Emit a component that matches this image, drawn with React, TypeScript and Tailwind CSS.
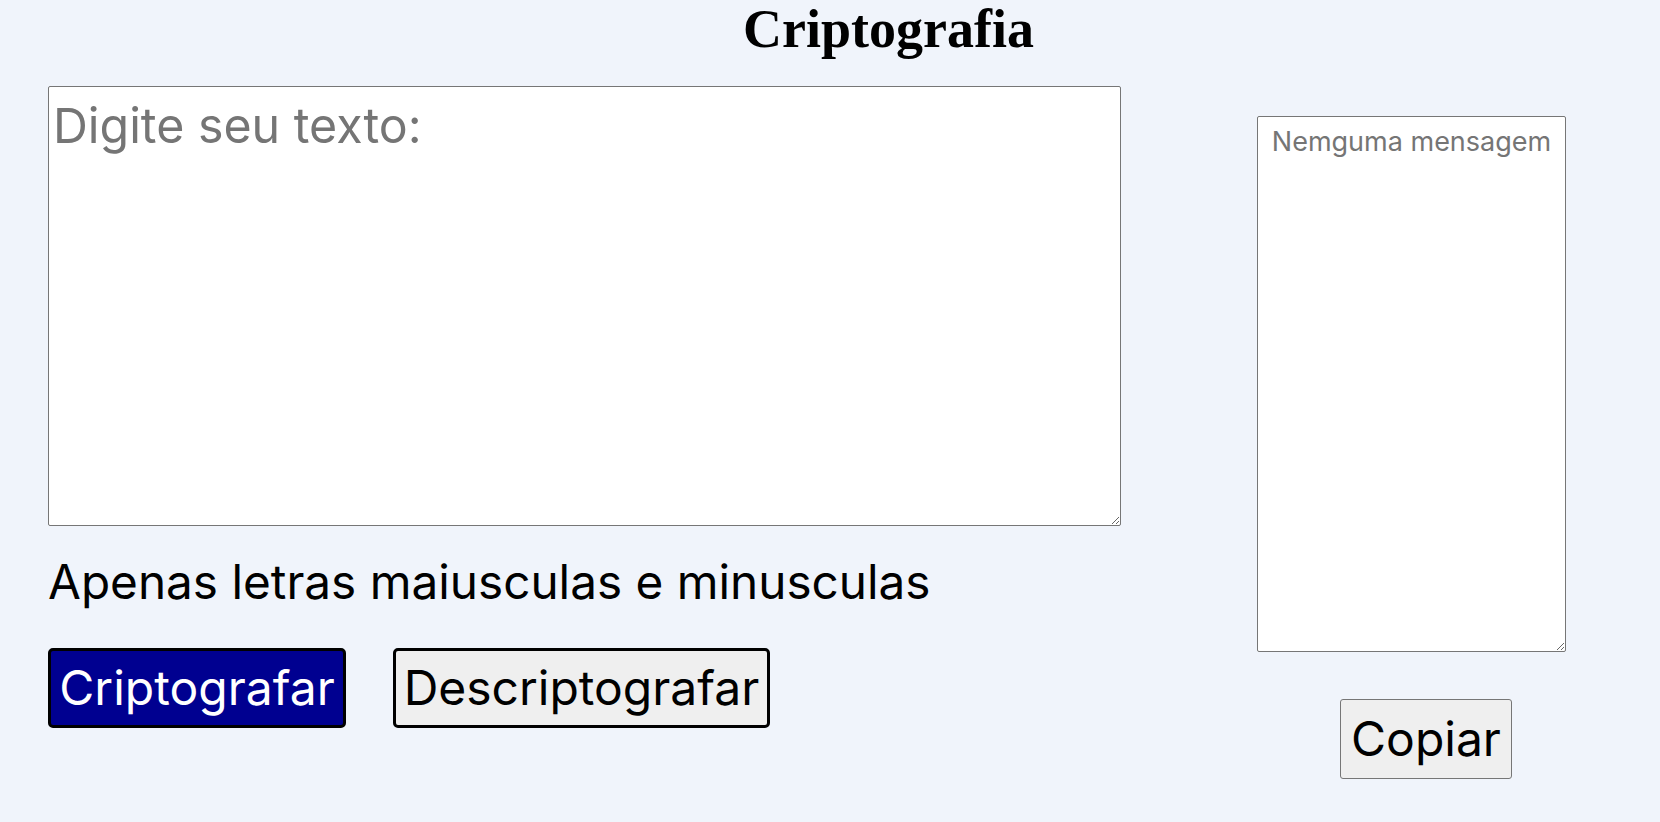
export default function App() {
    return (
        <div className="min-h-screen bg-[#f0f4fb] font-['Inter',sans-serif] text-black">
            <h1 className="pl-[743px] pt-[2px] font-['Liberation_Serif',serif] text-[54px] font-bold leading-none">
                Criptografia
            </h1>

            <div className="flex items-start">
                {/* Entrada */}
                <div className="ml-[48px] mt-[30px] flex flex-col">
                    <textarea
                        placeholder="Digite seu texto:"
                        className="w-[1073px] h-[440px] border border-[#767676] rounded-[2px] bg-white px-[4px] pt-[3px] text-[48.3px] leading-[1.5] placeholder:text-[#757575] outline-none"
                    />
                    <p className="mt-[27px] text-[47.7px] leading-[58px]">Apenas letras maiusculas e minusculas</p>
                    <div className="mt-[37px] flex gap-[47px]">
                        <button className="w-[298px] h-[80px] border-[3px] border-black rounded-[5px] bg-[#000090] text-white text-[48px]">
                            Criptografar
                        </button>
                        <button className="w-[377px] h-[80px] border-[3px] border-black rounded-[5px] bg-[#efefef] text-[48px]">
                            Descriptografar
                        </button>
                    </div>
                </div>

                {/* Saida */}
                <div className="ml-[136px] mt-[60px] flex flex-col items-start">
                    <textarea
                        placeholder="Nemguma mensagem"
                        className="w-[309px] h-[536px] border border-[#767676] rounded-[2px] bg-white px-[2px] pt-[5px] text-center text-[27px] placeholder:text-[#757575] outline-none"
                    />
                    <button className="ml-[83px] mt-[47px] w-[172px] h-[80px] border border-[#767676] rounded-[3px] bg-[#efefef] text-[48px]">
                        Copiar
                    </button>
                </div>
            </div>
        </div>
    );
}
